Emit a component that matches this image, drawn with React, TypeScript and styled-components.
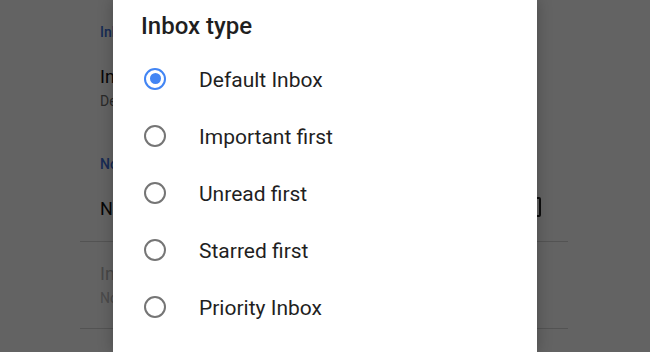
import React from "react";
import styled, { createGlobalStyle } from "styled-components";

const Global = createGlobalStyle`
  html, body { margin: 0; padding: 0; background: #ffffff; }
  body { font-family: Roboto, "Noto Sans", Arial, sans-serif; overflow: hidden; }
  #root { width: 650px; height: 352px; position: relative; overflow: hidden; }
`;

const Screen = styled.div`
  position: relative;
  width: 650px;
  height: 352px;
  overflow: hidden;
  background: #ffffff;
`;

const Settings = styled.div`
  margin-left: 80px;
  width: 488px;
  display: flex;
  flex-direction: column;
`;

const SectionHeader = styled.div<{ $top: number }>`
  padding: ${(p) => p.$top}px 20px 0;
  font-size: 14px;
  font-weight: 500;
  color: #3b6fd8;
  line-height: 16px;
`;

const Item = styled.div<{ $disabled?: boolean; $divider?: boolean; $top: number; $bottom: number }>`
  display: flex;
  align-items: center;
  justify-content: space-between;
  padding: ${(p) => `${p.$top}px 27px ${p.$bottom}px 20px`};
  border-bottom: ${(p) => (p.$divider ? "1px solid #d6d6d6" : "none")};
  color: ${(p) => (p.$disabled ? "#b8b8b8" : "#111111")};
`;

const ItemText = styled.div`
  display: flex;
  flex-direction: column;
  gap: 2px;
`;

const ItemTitle = styled.div`
  font-size: 18px;
  line-height: 24px;
`;

const ItemSub = styled.div<{ $disabled?: boolean }>`
  font-size: 14px;
  line-height: 20px;
  color: ${(p) => (p.$disabled ? "#c0c0c0" : "#6a6a6a")};
`;

const Checkbox = styled.div`
  width: 16px;
  height: 16px;
  margin-top: -4px;
  border: 2px solid #222;
  border-radius: 2px;
`;

const Scrim = styled.div`
  position: absolute;
  inset: 0;
  background: rgba(0, 0, 0, 0.61);
`;

const Dialog = styled.div`
  position: absolute;
  left: 113px;
  top: 0;
  width: 424px;
  height: 352px;
  background: #ffffff;
  box-shadow: 0 0 14px rgba(0, 0, 0, 0.25);
  display: flex;
  flex-direction: column;
  padding-top: 12px;
  box-sizing: border-box;
`;

const Title = styled.div`
  padding-left: 28px;
  font-size: 24px;
  font-weight: 500;
  line-height: 28px;
  color: #1f1f1f;
  margin-bottom: 10px;
`;

const Option = styled.div`
  height: 57px;
  display: flex;
  align-items: center;
  padding-left: 31px;
`;

const Radio = styled.div<{ $checked?: boolean }>`
  width: 22px;
  height: 22px;
  box-sizing: border-box;
  border-radius: 50%;
  border: 2px solid ${(p) => (p.$checked ? "#4285f4" : "#757575")};
  display: flex;
  align-items: center;
  justify-content: center;
  flex-shrink: 0;
`;

const Dot = styled.div`
  width: 11px;
  height: 11px;
  border-radius: 50%;
  background: #4285f4;
`;

const Label = styled.div`
  margin-left: 33px;
  padding-top: 2px;
  font-size: 21px;
  color: #1f1f1f;
  line-height: 24px;
`;

const options = [
  "Default Inbox",
  "Important first",
  "Unread first",
  "Starred first",
  "Priority Inbox",
];

export default function App() {
  return (
    <Screen>
      <Global />
      <Settings>
        <SectionHeader $top={24}>Inbox</SectionHeader>
        <Item $top={25} $bottom={0}>
          <ItemText>
            <ItemTitle>Inbox type</ItemTitle>
            <ItemSub>Default Inbox</ItemSub>
          </ItemText>
        </Item>
        <SectionHeader $top={45}>Notifications</SectionHeader>
        <Item $divider $top={25} $bottom={20}>
          <ItemText>
            <ItemTitle>Notifications</ItemTitle>
          </ItemText>
          <Checkbox />
        </Item>
        <Item $disabled $divider $top={20} $bottom={20}>
          <ItemText>
            <ItemTitle>Inbox notifications</ItemTitle>
            <ItemSub $disabled>Notify once</ItemSub>
          </ItemText>
        </Item>
      </Settings>
      <Scrim />
      <Dialog>
        <Title>Inbox type</Title>
        {options.map((o, i) => (
          <Option key={o}>
            <Radio $checked={i === 0}>{i === 0 && <Dot />}</Radio>
            <Label>{o}</Label>
          </Option>
        ))}
      </Dialog>
    </Screen>
  );
}
